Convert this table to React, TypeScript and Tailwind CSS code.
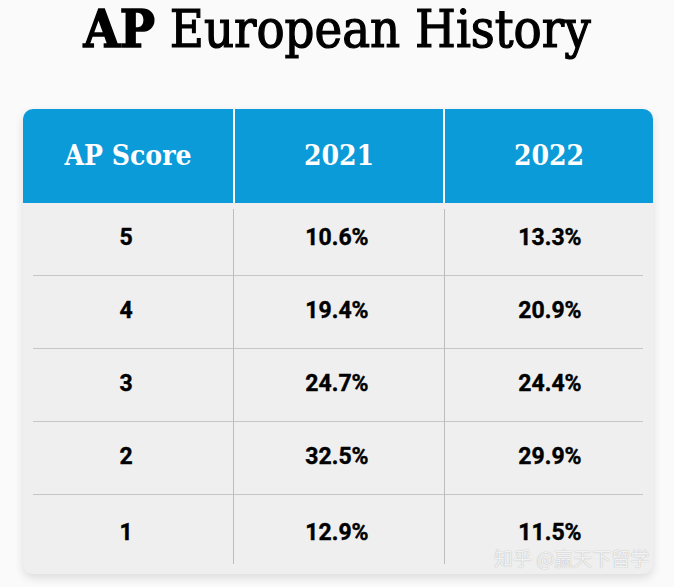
const rows = [
  { score: "5", y2021: "10.6%", y2022: "13.3%" },
  { score: "4", y2021: "19.4%", y2022: "20.9%" },
  { score: "3", y2021: "24.7%", y2022: "24.4%" },
  { score: "2", y2021: "32.5%", y2022: "29.9%" },
  { score: "1", y2021: "12.9%", y2022: "11.5%" },
];

const slab = "font-['DejaVu_Serif_Condensed','DejaVu_Serif',serif]";

export default function App() {
  return (
    <div className="relative h-[587px] w-[674px] overflow-hidden bg-[#fafafa]">
      {/* Title */}
      <h1
        className={`text-center text-[52px] leading-[58px] text-black [-webkit-text-stroke:1.2px_black] ${slab}`}
      >
        <span className="font-bold [-webkit-text-stroke:1.5px_black]">AP</span> European History
      </h1>

      {/* Score table card */}
      <div className="mx-[23px] mt-[51px] w-[630px] overflow-hidden rounded-[10px] bg-[#efefef] shadow-[0_4px_10px_rgba(0,0,0,0.12)]">
        <div className="grid h-[94px] grid-cols-3 bg-[#0b9bd9] text-white">
          {["AP Score", "2021", "2022"].map((h, i) => (
            <div
              key={h}
              className={`flex items-center justify-center text-[28px] font-bold ${slab} ${
                i > 0 ? "border-l-2 border-white" : ""
              }`}
            >
              {h}
            </div>
          ))}
        </div>

        <div className="relative font-['Roboto',sans-serif] text-[23px] font-bold text-black">
          {rows.map((r, i) => (
            <div
              key={r.score}
              className={`mx-[10px] grid grid-cols-[186px_236px_190px] ${
                i < 4 ? "h-[73px] border-b-[1.5px] border-[#c6c6c6]" : "h-[79px]"
              }`}
            >
              <div className="flex items-center justify-center pb-[2px] [-webkit-text-stroke:0.4px_black]">{r.score}</div>
              <div className="flex items-center justify-center pb-[2px] [-webkit-text-stroke:0.4px_black]">{r.y2021}</div>
              <div className="flex items-center justify-center pb-[2px] [-webkit-text-stroke:0.4px_black]">{r.y2022}</div>
            </div>
          ))}
          <div className="absolute left-[210px] top-[6px] bottom-[10px] w-px bg-[#bdbdbd]" />
          <div className="absolute left-[421px] top-[6px] bottom-[10px] w-px bg-[#bdbdbd]" />
        </div>
      </div>

      {/* Watermark */}
      <div className="absolute left-[494px] top-[546px] whitespace-nowrap font-['Noto_Sans_CJK_SC',sans-serif] text-[19px] leading-[24px] text-white/85 [text-shadow:0_0_1px_rgba(0,0,0,0.35)]">
        知乎 @赢天下留学
      </div>
    </div>
  );
}
